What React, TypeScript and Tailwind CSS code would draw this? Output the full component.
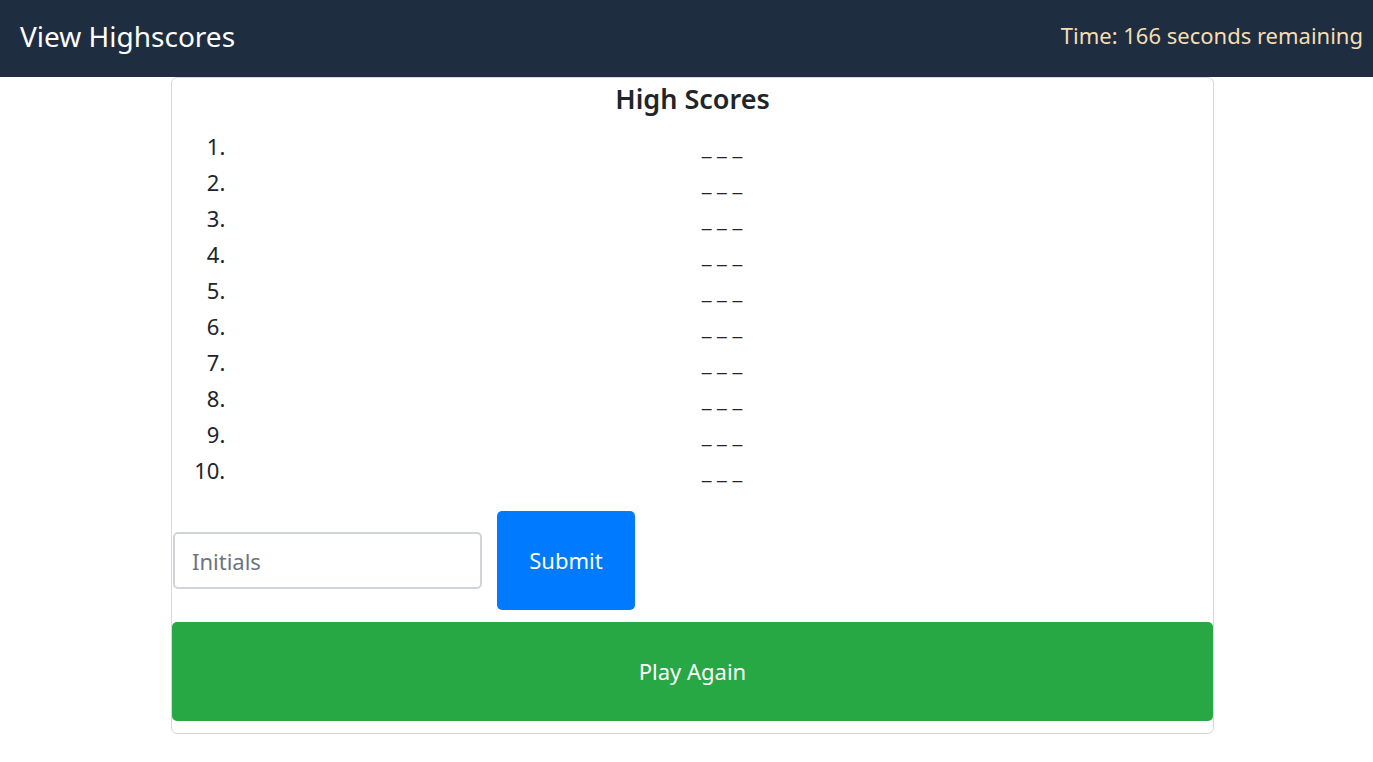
const rows = Array.from({ length: 10 }, (_, i) => i + 1);

export default function App() {
  return (
    <div className="min-h-screen bg-white text-[#212529]" style={{ fontFamily: '"Noto Sans", "Open Sans", sans-serif' }}>
      <header className="flex h-[77px] items-center justify-between bg-[#1e2d40] pb-[6px] pl-5 pr-[10px]">
        <span className="text-[28px] text-white">View Highscores</span>
        <span className="text-[22px] text-[#f5deb3]">Time: 166 seconds remaining</span>
      </header>

      <main className="ml-[171px] w-[1043px] rounded-md border border-[#d8d8d8] pb-3">
        <h4 className="pt-[3px] text-center text-[27px] font-semibold leading-[36px]">High Scores</h4>

        <ol className="mt-[11px] list-decimal pl-[59px] text-[22px] leading-[36px]">
          {rows.map((n) => (
            <li key={n} className="text-center">
              _ _ _
            </li>
          ))}
        </ol>

        <div className="mt-[23px] flex items-center gap-[15px] pl-px">
          <input
            type="text"
            placeholder="Initials"
            className="h-[57px] w-[309px] rounded-[5px] border-2 border-[#d1d5da] px-[17px] text-[22px] outline-none placeholder:text-[#6c757d]"
          />
          <button className="h-[99px] w-[138px] rounded-[5px] bg-[#007bff] text-[22px] text-white">Submit</button>
        </div>

        <button className="mt-[12px] block h-[99px] w-[1041px] rounded-[5px] bg-[#28a745] text-[22px] text-white">
          Play Again
        </button>
      </main>
    </div>
  );
}
